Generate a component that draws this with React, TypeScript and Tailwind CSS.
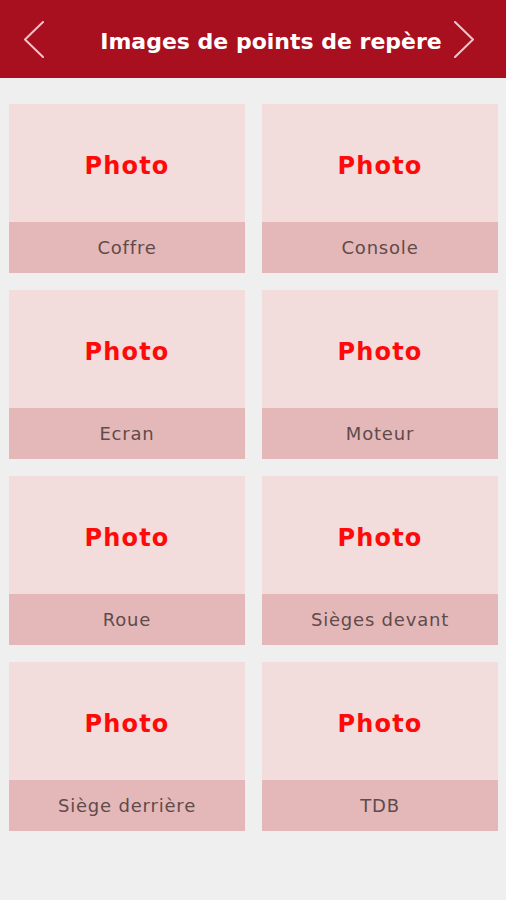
const items = [
  "Coffre",
  "Console",
  "Ecran",
  "Moteur",
  "Roue",
  "Sièges devant",
  "Siège derrière",
  "TDB",
];

function Chevron({dir}: {dir: "left" | "right"}) {
  return (
    <svg width="20" height="37" viewBox="0 0 20 37" fill="none">
      <polyline
        points={dir === "left" ? "19,1 1,18.5 19,36" : "1,1 19,18.5 1,36"}
        stroke="#f2c4c9"
        strokeWidth="2"
        strokeLinecap="round"
        strokeLinejoin="round"
      />
    </svg>
  );
}

function Tile({label}: {label: string}) {
  return (
    <div className="flex flex-col h-[169px]">
      <div className="h-[118px] bg-[#f3dcdc] flex items-center justify-center pt-[6px]">
        <span className="text-[24px] font-bold text-[#ff0a0a] tracking-[1.2px]">
          Photo
        </span>
      </div>
      <div className="flex-1 bg-[#e4b8b8] flex items-center justify-center">
        <span className="text-[18px] text-[#5f4b4b] tracking-[0.8px]">
          {label}
        </span>
      </div>
    </div>
  );
}

export default function App() {
  return (
    <div
      className="w-[506px] h-[900px] bg-[#efefef]"
      style={{fontFamily: "'DejaVu Sans', 'Liberation Sans', sans-serif"}}
    >
      <header className="h-[78px] bg-[#a81020] flex items-center pl-[24px] pr-[32px]">
        <Chevron dir="left" />
        <h1 className="flex-1 text-center pl-[48px] pr-[4px] pt-[5px] text-[22px] font-bold text-white">
          Images de points de repère
        </h1>
        <Chevron dir="right" />
      </header>
      <div className="grid grid-cols-2 gap-x-[17px] gap-y-[17px] pl-[9px] pr-[8px] pt-[26px]">
        {items.map((it) => (
          <Tile key={it} label={it} />
        ))}
      </div>
    </div>
  );
}
